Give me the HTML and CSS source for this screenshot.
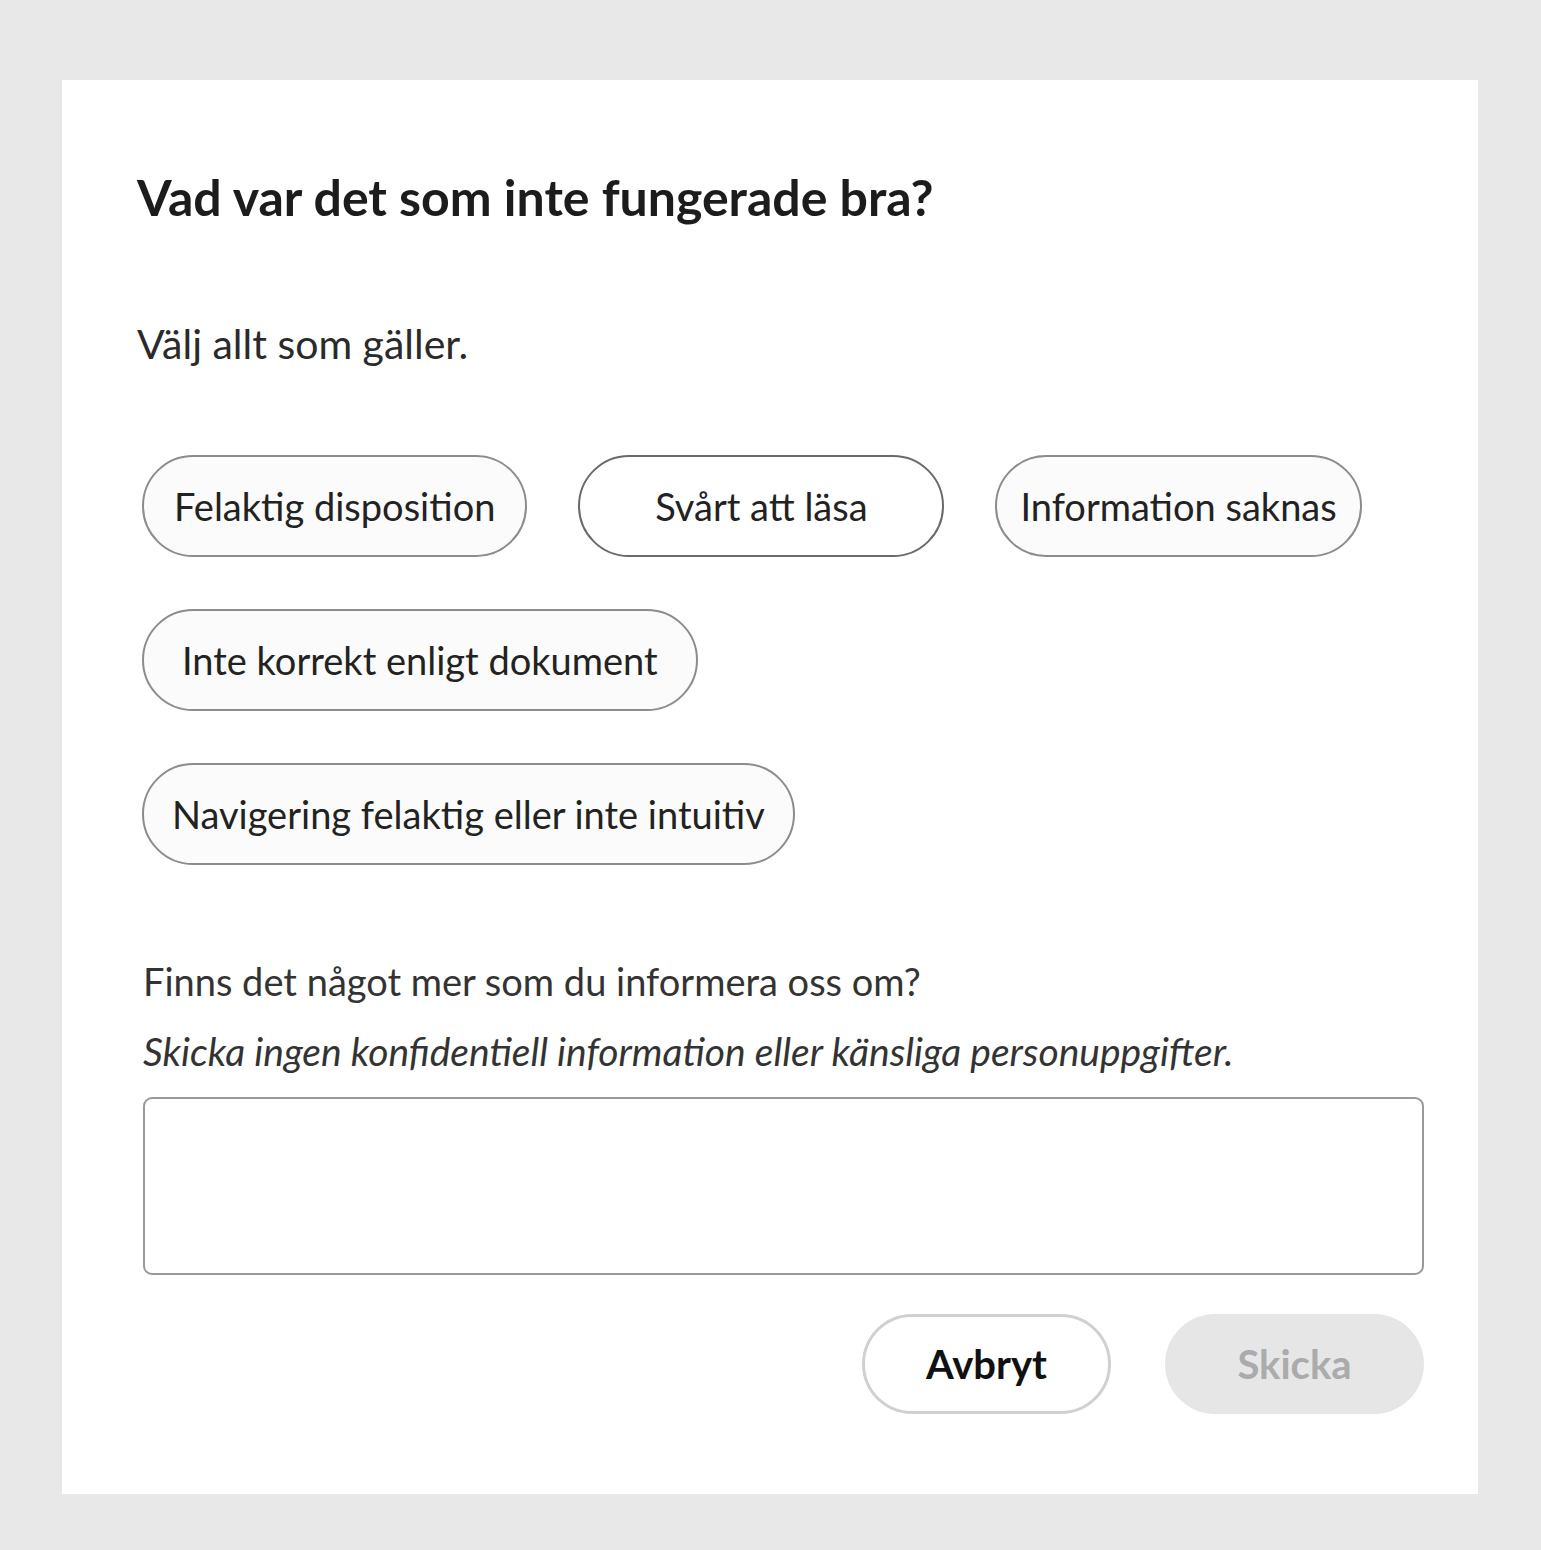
FILE: index.html
```html
<!DOCTYPE html>
<html lang="sv">
<head>
<meta charset="utf-8">
<title>Feedback</title>
<link rel="stylesheet" href="styles.css">
</head>
<body>
<div class="card">
  <h1 class="title">Vad var det som inte fungerade bra?</h1>
  <p class="subtitle">Välj allt som gäller.</p>
  <div class="chips">
    <div class="chip-row">
      <button class="chip">Felaktig disposition</button>
      <button class="chip chip-active">Svårt att läsa</button>
      <button class="chip chip-tight">Information saknas</button>
    </div>
    <div class="chip-row">
      <button class="chip chip-wide">Inte korrekt enligt dokument</button>
    </div>
    <div class="chip-row">
      <button class="chip chip-long">Navigering felaktig eller inte intuitiv</button>
    </div>
  </div>
  <div class="more">
    <p class="question">Finns det något mer som du informera oss om?</p>
    <p class="note">Skicka ingen konfidentiell information eller känsliga personuppgifter.</p>
    <textarea class="comment"></textarea>
  </div>
  <div class="actions">
    <button class="btn btn-cancel">Avbryt</button>
    <button class="btn btn-send" disabled>Skicka</button>
  </div>
</div>
</body>
</html>
```
FILE: styles.css
```css
html, body {
  margin: 0;
  padding: 0;
  background: #e8e8e8;
}
body {
  font-family: Lato, "Open Sans", sans-serif;
  padding: 80px 63px 57px 62px;
}
.card {
  background: #ffffff;
  width: 1416px;
  box-sizing: border-box;
  padding: 87px 54px 80px 75px;
}
.title {
  margin: 0;
  font-size: 50px;
  line-height: 60px;
  font-weight: 700;
  color: #1c1c1c;
}
.subtitle {
  margin: 89px 0 0 0;
  font-size: 41px;
  line-height: 56px;
  color: #2a2a2a;
}
.chips {
  margin: 83px 0 0 5px;
  display: flex;
  flex-direction: column;
  gap: 52px;
}
.chip-row {
  display: flex;
  gap: 51px;
}
.chip {
  font-family: inherit;
  height: 102px;
  padding: 0 30px;
  font-size: 38px;
  color: #222;
  background: #fbfbfb;
  border: 2px solid #8c8c8c;
  border-radius: 51px;
  box-sizing: border-box;
}
.chip-tight { padding: 0 23px; }
.chip-wide { padding: 0 38px; }
.chip-long { padding: 0 28px; }
.chip-active {
  background: #ffffff;
  border-color: #6a6a6a;
  min-width: 366px;
}
.more {
  margin: 92px 0 0 6px;
  display: flex;
  flex-direction: column;
}
.question {
  margin: 0;
  font-size: 38px;
  line-height: 48px;
  color: #333;
}
.note {
  margin: 22px 0 0 0;
  font-size: 39px;
  line-height: 48px;
  font-style: italic;
  color: #333;
}
.comment {
  margin: 22px 0 0 0;
  height: 178px;
  box-sizing: border-box;
  border: 2px solid #999;
  border-radius: 9px;
  resize: none;
  background: #fff;
}
.actions {
  margin-top: 39px;
  display: flex;
  justify-content: flex-end;
  gap: 54px;
}
.btn {
  font-family: inherit;
  height: 100px;
  border-radius: 50px;
  font-size: 40px;
  font-weight: 700;
  box-sizing: border-box;
}
.btn-cancel {
  width: 249px;
  background: #fff;
  border: 3px solid #d0d0d0;
  color: #111;
}
.btn-send {
  width: 259px;
  background: #e6e6e6;
  border: none;
  color: #ababab;
}
```
